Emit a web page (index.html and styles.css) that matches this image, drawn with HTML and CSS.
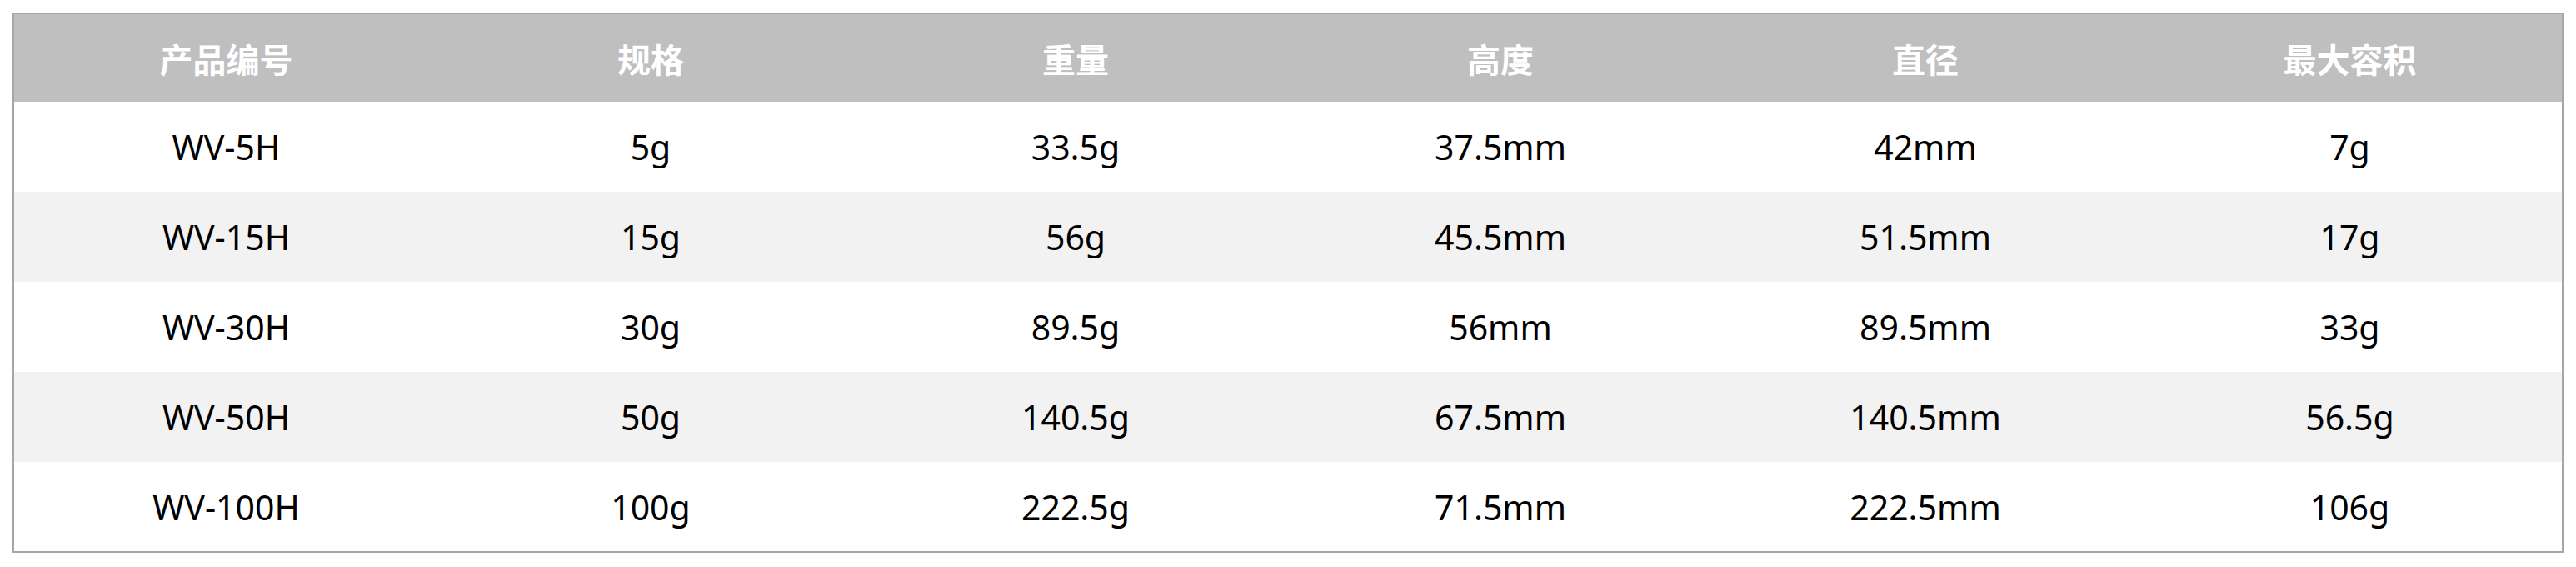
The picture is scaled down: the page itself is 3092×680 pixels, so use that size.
FILE: index.html
```html
<!DOCTYPE html>
<html lang="zh-CN">
<head>
<meta charset="utf-8">
<title>产品规格</title>
<link rel="stylesheet" href="styles.css">
</head>
<body>
<table class="spec">
  <thead>
    <tr class="head-row">
      <th>产品编号</th>
      <th>规格</th>
      <th>重量</th>
      <th>高度</th>
      <th>直径</th>
      <th>最大容积</th>
    </tr>
  </thead>
  <tbody>
    <tr class="row">
      <td>WV-5H</td><td>5g</td><td>33.5g</td><td>37.5mm</td><td>42mm</td><td>7g</td>
    </tr>
    <tr class="row alt">
      <td>WV-15H</td><td>15g</td><td>56g</td><td>45.5mm</td><td>51.5mm</td><td>17g</td>
    </tr>
    <tr class="row">
      <td>WV-30H</td><td>30g</td><td>89.5g</td><td>56mm</td><td>89.5mm</td><td>33g</td>
    </tr>
    <tr class="row alt">
      <td>WV-50H</td><td>50g</td><td>140.5g</td><td>67.5mm</td><td>140.5mm</td><td>56.5g</td>
    </tr>
    <tr class="row">
      <td>WV-100H</td><td>100g</td><td>222.5g</td><td>71.5mm</td><td>222.5mm</td><td>106g</td>
    </tr>
  </tbody>
</table>
</body>
</html>
```

FILE: styles.css
```css
html, body {
  background: #ffffff;
}
body {
  margin: 15px;
  font-family: "Noto Sans", "Noto Sans CJK SC", sans-serif;
}
.spec {
  width: 3062px;
  table-layout: fixed;
  border-collapse: collapse;
  border: 2px solid #a6a6a6;
}
.spec th,
.spec td {
  padding: 0;
  text-align: center;
  vertical-align: middle;
}
.head-row {
  height: 106px;
  background: #bfbfbf;
}
.head-row th {
  color: #ffffff;
  font-family: "Noto Sans CJK SC", sans-serif;
  font-weight: 700;
  font-size: 40px;
}
.row {
  height: 108px;
  background: #ffffff;
}
.row.alt {
  background: #f2f2f2;
}
.row td {
  color: #000000;
  font-size: 41px;
}
```
